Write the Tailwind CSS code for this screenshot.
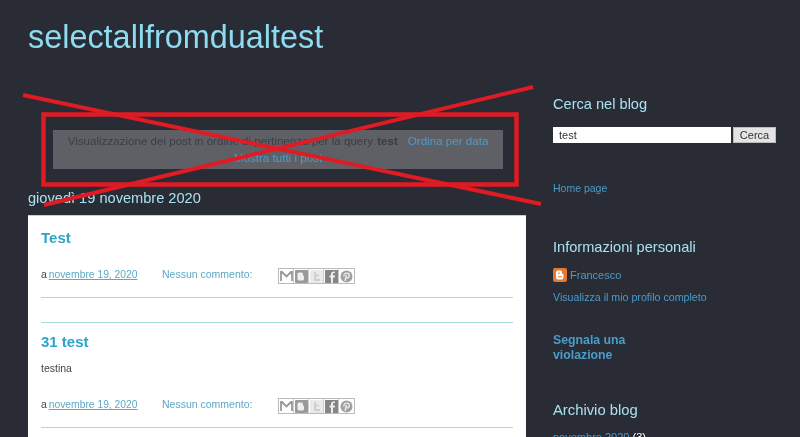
<!DOCTYPE html>
<html lang="it">
<head>
    <meta charset="UTF-8">
    <meta name="viewport" content="width=device-width, initial-scale=1.0">
    <title>selectallfromdualtest</title>
    <script src="https://cdn.jsdelivr.net/npm/@tailwindcss/browser@4"></script>
</head>
<body class="bg-[#292c35] font-['Liberation_Sans',Arial,sans-serif] text-[#444]">
<div class="relative w-[800px] h-[437px] overflow-hidden blur-[0.35px]">
    <!-- header -->
    <header class="pl-[28px] pt-[19px] h-[93px]">
        <h1 class="text-[32.4px] leading-[36px] text-[#8fdcf0]">selectallfromdualtest</h1>
    </header>

    <div class="flex">
        <!-- main column -->
        <main class="w-[498px] ml-[28px] shrink-0">
            <!-- search status box -->
            <div class="ml-[25px] mt-[37px] w-[450px] h-[39px] bg-[#5f6066] text-[11.6px] leading-[17px] text-center text-[#3b3d43] pt-[2px]">
                <div>Visualizzazione dei post in ordine di pertinenza per la query <b class="ml-[1px]">test</b><a class="ml-[10px] text-[#4a9ccb]">Ordina per data</a></div>
                <a class="text-[#4a9ccb]">Mostra tutti i post</a>
            </div>

            <h2 class="mt-[20px] text-[14.6px] leading-[18px] text-[#a9e2ef]">giovedì 19 novembre 2020</h2>

            <!-- posts -->
            <div class="mt-[8px] bg-white h-[240px] px-[13px] pt-[13px] border-t border-[#a9dce8]">
                <article class="h-[69px] border-b border-[#a6dbe6]">
                    <h3 class="text-[15px] leading-[18px] font-bold text-[#2aa5c9]">Test</h3>
                    <div class="mt-[20px] flex items-center h-[16px] text-[10.5px]">
                        <span class="w-[121px] shrink-0">a <a class="-ml-[1px] underline text-[#5ba8c4] text-[10.3px]">novembre 19, 2020</a></span>
                        <a class="w-[116px] shrink-0 text-[#5ba8c4]">Nessun commento:</a>
                        <div class="flex border border-[#bbb] h-[16px] mt-[2px]">
                            <span class="w-[15px] flex items-center justify-center border-r border-[#ccc]"><svg width="13" height="11" viewBox="0 0 13 11"><path d="M1 10V1h1l4.500 4.500L11 1h1v9" fill="none" stroke="#999" stroke-width="1.800"/></svg></span>
                            <span class="w-[15px] flex items-center justify-center border-r border-[#ccc]"><svg width="13" height="13" viewBox="0 0 13 13"><rect width="13" height="13" rx="1" fill="#9a9a9a"/><path d="M4.500 2.500h2a1.500 1.500 0 0 1 1.500 1.500v1a1 1 0 0 0 1 1v3a1.500 1.500 0 0 1-1.500 1.500h-3.500a1.500 1.500 0 0 1-1.500-1.500V4a1.500 1.500 0 0 1 1.500-1.500z" fill="#eee"/></svg></span>
                            <span class="w-[15px] flex items-center justify-center border-r border-[#ccc]"><svg width="13" height="13" viewBox="0 0 13 13"><rect width="13" height="13" fill="#eaeaea"/><path d="M5 2v8h5M5 5.500h4" fill="none" stroke="#cfcfcf" stroke-width="2"/></svg></span>
                            <span class="w-[15px] flex items-center justify-center border-r border-[#ccc]"><svg width="13" height="13" viewBox="0 0 13 13"><rect width="13" height="13" fill="#858585"/><path d="M8 13V7.500h2V5.500H8V4c0-.6.4-1 1-1h1V1.500H8.500C7 1.500 6 2.500 6 4v1.500H4.500v2H6V13z" fill="#eee"/></svg></span>
                            <span class="w-[15px] flex items-center justify-center"><svg width="13" height="13" viewBox="0 0 13 13"><circle cx="6.500" cy="6.500" r="6" fill="#a0a0a0"/><path d="M5 11l1.500-6M4 6.500C3.500 4.500 5 3.200 6.800 3.200c1.700 0 2.700 1.200 2.500 2.700-.2 1.500-1.500 2.500-2.800 1.800" fill="none" stroke="#eee" stroke-width="1.300"/></svg></span>
                        </div>
                    </div>
                </article>

                <article class="mt-[24px] border-t border-[#a6dbe6] pt-[10px] h-[106px] border-b">
                    <h3 class="text-[15px] leading-[18px] font-bold text-[#2aa5c9]">31 test</h3>
                    <p class="mt-[10px] text-[10.5px] leading-[14px]">testina</p>
                    <div class="mt-[22px] flex items-center h-[16px] text-[10.5px]">
                        <span class="w-[121px] shrink-0">a <a class="-ml-[1px] underline text-[#5ba8c4] text-[10.3px]">novembre 19, 2020</a></span>
                        <a class="w-[116px] shrink-0 text-[#5ba8c4]">Nessun commento:</a>
                        <div class="flex border border-[#bbb] h-[16px] mt-[2px]">
                            <span class="w-[15px] flex items-center justify-center border-r border-[#ccc]"><svg width="13" height="11" viewBox="0 0 13 11"><path d="M1 10V1h1l4.500 4.500L11 1h1v9" fill="none" stroke="#999" stroke-width="1.800"/></svg></span>
                            <span class="w-[15px] flex items-center justify-center border-r border-[#ccc]"><svg width="13" height="13" viewBox="0 0 13 13"><rect width="13" height="13" rx="1" fill="#9a9a9a"/><path d="M4.500 2.500h2a1.500 1.500 0 0 1 1.500 1.500v1a1 1 0 0 0 1 1v3a1.500 1.500 0 0 1-1.500 1.500h-3.500a1.500 1.500 0 0 1-1.500-1.500V4a1.500 1.500 0 0 1 1.500-1.500z" fill="#eee"/></svg></span>
                            <span class="w-[15px] flex items-center justify-center border-r border-[#ccc]"><svg width="13" height="13" viewBox="0 0 13 13"><rect width="13" height="13" fill="#eaeaea"/><path d="M5 2v8h5M5 5.500h4" fill="none" stroke="#cfcfcf" stroke-width="2"/></svg></span>
                            <span class="w-[15px] flex items-center justify-center border-r border-[#ccc]"><svg width="13" height="13" viewBox="0 0 13 13"><rect width="13" height="13" fill="#858585"/><path d="M8 13V7.500h2V5.500H8V4c0-.6.4-1 1-1h1V1.500H8.500C7 1.500 6 2.500 6 4v1.500H4.500v2H6V13z" fill="#eee"/></svg></span>
                            <span class="w-[15px] flex items-center justify-center"><svg width="13" height="13" viewBox="0 0 13 13"><circle cx="6.500" cy="6.500" r="6" fill="#a0a0a0"/><path d="M5 11l1.500-6M4 6.500C3.500 4.500 5 3.200 6.800 3.200c1.700 0 2.700 1.200 2.500 2.700-.2 1.500-1.500 2.500-2.800 1.800" fill="none" stroke="#eee" stroke-width="1.300"/></svg></span>
                        </div>
                    </div>
                </article>
            </div>
        </main>

        <!-- sidebar -->
        <aside class="ml-[27px] w-[223px] shrink-0">
            <h2 class="text-[14.6px] leading-[18px] text-[#a9e2ef] mt-[2px]">Cerca nel blog</h2>
            <div class="mt-[14px] flex gap-[2px]">
                <input value="test" class="w-[178px] h-[16px] bg-white px-[6px] text-[11px] text-[#333] outline-none">
                <button class="w-[43px] h-[16px] bg-[#e4e4e4] border border-[#bbb] text-[11px] leading-[13px] text-[#333]">Cerca</button>
            </div>
            <a class="block mt-[38px] text-[10.5px] leading-[14px] text-[#4a9ccb]">Home page</a>

            <h2 class="mt-[43px] text-[14.6px] leading-[18px] text-[#a9e2ef]">Informazioni personali</h2>
            <div class="mt-[12px] flex items-center gap-[3px] h-[14px]">
                <svg width="14" height="14" viewBox="0 0 14 14"><rect width="14" height="14" rx="2" fill="#e8772c"/><path d="M5 2.500h2.500A1.500 1.500 0 0 1 9 4v1a1 1 0 0 0 1 1h.500v3.500a2 2 0 0 1-2 2H5a2 2 0 0 1-2-2v-5a2 2 0 0 1 2-2z" fill="#fff"/><path d="M5 5.200h2M5 8.800h4" stroke="#e8772c" stroke-width="1"/></svg>
                <a class="text-[11px] text-[#4a9ccb]">Francesco</a>
            </div>
            <a class="block mt-[8px] text-[10.65px] leading-[14px] text-[#4a9ccb]">Visualizza il mio profilo completo</a>

            <a class="block mt-[29px] w-[90px] text-[12.3px] leading-[15px] font-bold text-[#4a9ccb]">Segnala una violazione</a>

            <h2 class="mt-[38px] text-[14.8px] leading-[18px] text-[#a9e2ef]">Archivio blog</h2>
            <div class="mt-[11px] text-[11px] leading-[14px] text-white"><a class="text-[#4a9ccb]">novembre 2020</a> (3)</div>
        </aside>
    </div>

    <!-- red annotation drawn over the page -->
    <svg class="absolute top-0 left-0" width="800" height="437" viewBox="0 0 800 437">
        <rect x="43.500" y="114.500" width="473" height="70" fill="none" stroke="#e01b24" stroke-width="4.500"/>
        <line x1="23" y1="95" x2="541" y2="204" stroke="#e01b24" stroke-width="4"/>
        <line x1="44" y1="205" x2="533" y2="87" stroke="#e01b24" stroke-width="4"/>
    </svg>
</div>
</body>
</html>
